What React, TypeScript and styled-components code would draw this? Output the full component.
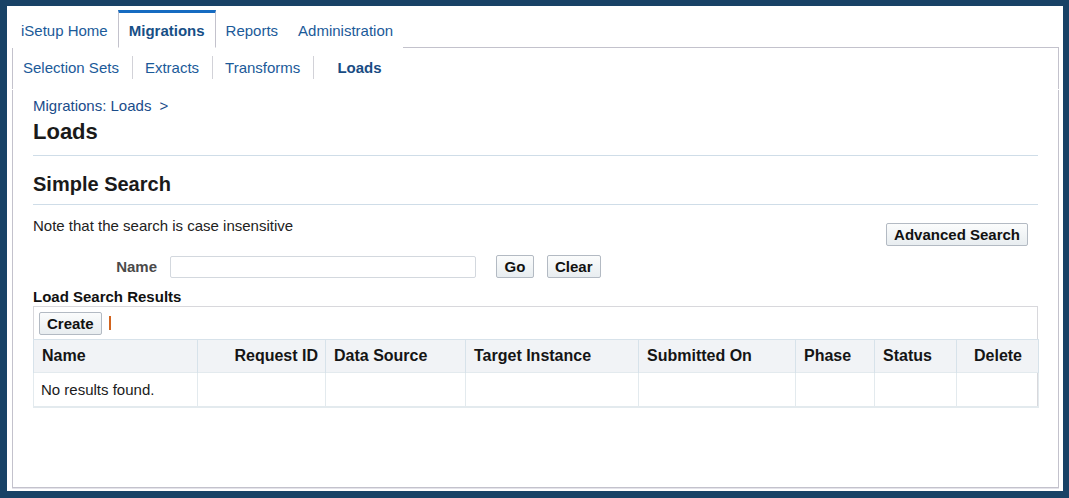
import React from 'react';
import styled, { createGlobalStyle } from 'styled-components';

const GlobalStyle = createGlobalStyle`
  html, body {
    margin: 0;
    padding: 0;
    background: #184266;
  }
  body {
    font-family: 'Liberation Sans', Arial, sans-serif;
    font-size: 15px;
    color: #1a1a1a;
  }
`;

const Frame = styled.div`
  box-sizing: border-box;
  height: 498px;
  padding: 6px 6px 7px 7px;
`;

const Page = styled.div`
  box-sizing: border-box;
  height: 100%;
  background: #fff;
  padding: 4px 4px 3px 5px;
  display: flex;
  flex-direction: column;
`;

const TabBar = styled.div`
  display: flex;
  align-items: stretch;
  height: 38px;
  margin-bottom: -1px;
  position: relative;
  z-index: 1;
`;

const Tab = styled.a<{ $active?: boolean; $first?: boolean }>`
  box-sizing: border-box;
  display: flex;
  align-items: center;
  padding: ${(p) => (p.$first ? '1px 10px 0 9px' : '1px 10px 0')};
  color: ${(p) => (p.$active ? '#174f86' : '#1b5a99')};
  font-weight: ${(p) => (p.$active ? 'bold' : 'normal')};
  text-decoration: none;
  cursor: pointer;
  border-top: 3px solid ${(p) => (p.$active ? '#156bc1' : 'transparent')};
  border-left: ${(p) => (p.$active ? '1px solid #c3c2cc' : 'none')};
  border-right: ${(p) => (p.$active ? '1px solid #c3c2cc' : 'none')};
  border-bottom: 1px solid ${(p) => (p.$active ? '#fff' : 'transparent')};
  background: #fff;
`;

const SubTabBox = styled.div`
  box-sizing: border-box;
  height: 42px;
  border: 1px solid #c3c2cc;
  border-bottom: none;
  display: flex;
  align-items: center;
  padding: 0 0 3px 10px;
`;

const SubTab = styled.a<{ $active?: boolean }>`
  padding: ${(p) => (p.$active ? '0 0 0 23px' : '0 13px 0 12px')};
  color: ${(p) => (p.$active ? '#194c83' : '#1b5a99')};
  font-weight: ${(p) => (p.$active ? 'bold' : 'normal')};
  text-decoration: none;
  cursor: pointer;
  &:first-child {
    padding-left: 0;
  }
`;

const SubSep = styled.span`
  width: 1px;
  height: 23px;
  background: #d2d2d8;
`;

const Content = styled.div`
  flex: 1;
  box-sizing: border-box;
  margin-top: 1px;
  border: 1px solid #c3c2cc;
  border-top: none;
  box-shadow: 0 1px 0 #e4e3ea;
  padding: 7px 20px 0 20px;
`;

const Breadcrumb = styled.div`
  line-height: 18px;
  color: #1a4c8a;
  span {
    margin-left: 8px;
  }
`;

const PageHeader = styled.div<{ $size: number; $gap: number }>`
  margin-top: ${(p) => p.$gap}px;
  font-size: ${(p) => p.$size}px;
  line-height: ${(p) => p.$size + 4}px;
  font-weight: bold;
  color: #1a1a1a;
  padding-bottom: ${(p) => (p.$size > 20 ? 10 : 8)}px;
  border-bottom: 1px solid #cfdde8;
`;

const NoteRow = styled.div`
  display: flex;
  justify-content: space-between;
  align-items: flex-start;
  margin-top: 12px;
  padding-right: 10px;
`;

const Note = styled.div`
  line-height: 18px;
  color: #222;
`;

const Button = styled.button`
  box-sizing: border-box;
  height: 23px;
  padding: 0 7px;
  font-family: 'Liberation Sans', Arial, sans-serif;
  font-size: 15px;
  font-weight: bold;
  color: #111;
  background: linear-gradient(#fbfcfc, #e8edf0);
  border: 1px solid #b3bac3;
  border-radius: 2px;
  cursor: pointer;
`;

const AdvancedButton = styled(Button)`
  margin-top: 6px;
`;

const SearchRow = styled.div`
  display: flex;
  align-items: center;
  margin-top: 9px;
  height: 23px;
`;

const FieldLabel = styled.label`
  width: 124px;
  text-align: right;
  font-weight: bold;
  color: #4a4a4a;
  margin-right: 13px;
`;

const TextInput = styled.input`
  box-sizing: border-box;
  width: 306px;
  height: 22px;
  border: 1px solid #d3d8de;
  border-radius: 2px;
  margin-right: 20px;
`;

const GoButton = styled(Button)`
  min-width: 38px;
`;

const ClearButton = styled(Button)`
  margin-left: 13px;
`;

const SectionTitle = styled.div`
  margin-top: 10px;
  line-height: 18px;
  font-weight: bold;
  color: #111;
`;

const ResultsBox = styled.div`
  border: 1px solid #d8d8dc;
  border-bottom: none;
`;

const Toolbar = styled.div`
  box-sizing: border-box;
  height: 32px;
  display: flex;
  align-items: center;
  padding-left: 5px;
`;

const ToolbarSep = styled.span`
  display: inline-block;
  width: 2px;
  height: 14px;
  margin-left: 7px;
  background: #d2641e;
`;

const Table = styled.table`
  border-collapse: collapse;
  table-layout: fixed;
  margin: 0 -1px;
  width: calc(100% + 2px);
`;

const Th = styled.th<{ $align?: string; $w: number }>`
  width: ${(p) => p.$w}px;
  box-sizing: border-box;
  height: 33px;
  background: #f1f3f6;
  border: 1px solid #d7e2ea;
  border-bottom: none;
  padding: 0 7px 0 8px;
  text-align: ${(p) => p.$align || 'left'};
  font-size: 16px;
  font-weight: bold;
  color: #151515;
  white-space: nowrap;
`;

const Td = styled.td`
  height: 34px;
  box-sizing: border-box;
  border: 1px solid #e3eaee;
  border-width: 1px 1px 2px 1px;
  padding: 0 7px;
  color: #1a1a1a;
`;

const columns: { label: string; w: number; align?: string }[] = [
  { label: 'Name', w: 164 },
  { label: 'Request ID', w: 128, align: 'right' },
  { label: 'Data Source', w: 140 },
  { label: 'Target Instance', w: 173 },
  { label: 'Submitted On', w: 157 },
  { label: 'Phase', w: 79 },
  { label: 'Status', w: 82 },
  { label: 'Delete', w: 82, align: 'center' },
];

export default function App() {
  return (
    <Frame>
      <GlobalStyle />
      <Page>
        <TabBar>
          <Tab $first>iSetup Home</Tab>
          <Tab $active>Migrations</Tab>
          <Tab>Reports</Tab>
          <Tab>Administration</Tab>
        </TabBar>
        <SubTabBox>
          <SubTab>Selection Sets</SubTab>
          <SubSep />
          <SubTab>Extracts</SubTab>
          <SubSep />
          <SubTab>Transforms</SubTab>
          <SubSep />
          <SubTab $active>Loads</SubTab>
        </SubTabBox>
        <Content>
          <Breadcrumb>
            Migrations: Loads<span>&gt;</span>
          </Breadcrumb>
          <PageHeader $size={22} $gap={4}>
            Loads
          </PageHeader>
          <PageHeader $size={20} $gap={16}>
            Simple Search
          </PageHeader>
          <NoteRow>
            <Note>Note that the search is case insensitive</Note>
            <AdvancedButton>Advanced Search</AdvancedButton>
          </NoteRow>
          <SearchRow>
            <FieldLabel>Name</FieldLabel>
            <TextInput type="text" />
            <GoButton>Go</GoButton>
            <ClearButton>Clear</ClearButton>
          </SearchRow>
          <SectionTitle>Load Search Results</SectionTitle>
          <ResultsBox>
            <Toolbar>
              <Button>Create</Button>
              <ToolbarSep />
            </Toolbar>
            <Table>
              <thead>
                <tr>
                  {columns.map((c) => (
                    <Th key={c.label} $w={c.w} $align={c.align}>
                      {c.label}
                    </Th>
                  ))}
                </tr>
              </thead>
              <tbody>
                <tr>
                  <Td>No results found.</Td>
                  {columns.slice(1).map((c) => (
                    <Td key={c.label} />
                  ))}
                </tr>
              </tbody>
            </Table>
          </ResultsBox>
        </Content>
      </Page>
    </Frame>
  );
}
